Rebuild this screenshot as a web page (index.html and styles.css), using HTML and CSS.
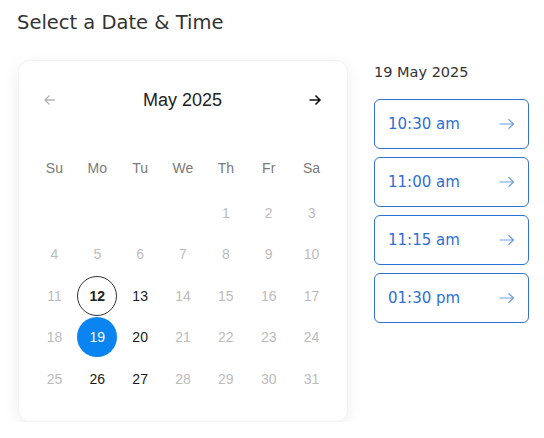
FILE: index.html
```html
<!DOCTYPE html>
<html>
<head>
<meta charset="utf-8">
<link rel="stylesheet" href="styles.css">
</head>
<body>
<div class="page">
  <h1 class="title">Select a Date &amp; Time</h1>
  <div class="main">
    <div class="card">
      <div class="cal-head">
        <span class="nav nav-prev">
          <svg width="14" height="14" viewBox="0 0 14 14"><path d="M12 7H2M6.5 2.5L2 7l4.5 4.5" fill="none" stroke="#b5b5b5" stroke-width="1.3"/></svg>
        </span>
        <span class="month">May 2025</span>
        <span class="nav nav-next">
          <svg width="14" height="14" viewBox="0 0 14 14"><path d="M1.5 7h10.5M7.5 2.5L12 7l-4.5 4.5" fill="none" stroke="#111" stroke-width="1.6"/></svg>
        </span>
      </div>
      <div class="grid weekdays">
        <span>Su</span><span>Mo</span><span>Tu</span><span>We</span><span>Th</span><span>Fr</span><span>Sa</span>
      </div>
      <div class="grid days">
        <span></span><span></span><span></span><span></span>
        <span class="off">1</span><span class="off">2</span><span class="off">3</span>
        <span class="off">4</span><span class="off">5</span><span class="off">6</span><span class="off">7</span><span class="off">8</span><span class="off">9</span><span class="off">10</span>
        <span class="off">11</span><span class="today"><b>12</b></span><span class="on">13</span><span class="off">14</span><span class="off">15</span><span class="off">16</span><span class="off">17</span>
        <span class="off">18</span><span class="selected"><b>19</b></span><span class="on">20</span><span class="off">21</span><span class="off">22</span><span class="off">23</span><span class="off">24</span>
        <span class="off">25</span><span class="on">26</span><span class="on">27</span><span class="off">28</span><span class="off">29</span><span class="off">30</span><span class="off">31</span>
      </div>
    </div>
    <div class="times">
      <div class="date-label">19 May 2025</div>
      <div class="slot"><span>10:30 am</span><svg class="arr" width="16" height="12" viewBox="0 0 16 12"><path d="M0.5 6h14M9.5 1.2L14.5 6l-5 4.8" fill="none" stroke="#6f9de6" stroke-width="1.2"/></svg></div>
      <div class="slot"><span>11:00 am</span><svg class="arr" width="16" height="12" viewBox="0 0 16 12"><path d="M0.5 6h14M9.5 1.2L14.5 6l-5 4.8" fill="none" stroke="#6f9de6" stroke-width="1.2"/></svg></div>
      <div class="slot"><span>11:15 am</span><svg class="arr" width="16" height="12" viewBox="0 0 16 12"><path d="M0.5 6h14M9.5 1.2L14.5 6l-5 4.8" fill="none" stroke="#6f9de6" stroke-width="1.2"/></svg></div>
      <div class="slot"><span>01:30 pm</span><svg class="arr" width="16" height="12" viewBox="0 0 16 12"><path d="M0.5 6h14M9.5 1.2L14.5 6l-5 4.8" fill="none" stroke="#6f9de6" stroke-width="1.2"/></svg></div>
    </div>
  </div>
</div>
</body>
</html>
```
FILE: styles.css
```css
* { box-sizing: border-box; }
html, body { margin: 0; padding: 0; background: #fff; }
.page {
  padding: 9px 0 0 17px;
  font-family: "DejaVu Sans", sans-serif;
}
.title {
  margin: 0;
  font-size: 19.5px;
  font-weight: 400;
  line-height: 27px;
  color: #333;
}
.main {
  display: flex;
  align-items: flex-start;
  margin-top: 24px;
  padding-left: 1px;
}
.card {
  width: 330px;
  height: 362px;
  background: #fff;
  border-radius: 12px;
  border: 1px solid #f2f2f2;
  box-shadow: 0 4px 16px rgba(0,0,0,0.075);
  padding: 19px 14px 22px;
  font-family: "Liberation Sans", Arial, sans-serif;
}
.cal-head {
  height: 40px;
  display: flex;
  align-items: center;
  justify-content: space-between;
  padding: 0 11px 0 10px;
}
.month {
  font-size: 18px;
  color: #222;
}
.nav { display: flex; align-items: center; }
.grid {
  display: grid;
  grid-template-columns: repeat(7, 1fr);
}
.weekdays {
  margin-top: 27px;
  height: 42px;
  align-items: center;
  margin-bottom: 3px;
}
.weekdays span {
  text-align: center;
  font-size: 14px;
  color: #7a7a7a;
}
.days span {
  height: 41.5px;
  display: flex;
  align-items: center;
  justify-content: center;
  font-size: 14px;
  position: relative;
}
.days .off { color: #bcbcbc; }
.days .on { color: #1a1a1a; }
.days .today b, .days .selected b {
  width: 40px;
  height: 40px;
  border-radius: 50%;
  display: flex;
  align-items: center;
  justify-content: center;
}
.days .today b {
  border: 1px solid #333;
  color: #222;
  font-weight: 700;
}
.days .selected b {
  background: #0a84f0;
  color: #fff;
  font-weight: 400;
}
.times {
  margin-left: 26px;
  width: 155px;
}
.date-label {
  font-size: 14.5px;
  color: #333;
  line-height: 20px;
  margin-top: 2px;
  margin-bottom: 17px;
}
.slot {
  height: 50px;
  border: 1px solid #3270d4;
  border-radius: 6px;
  display: flex;
  align-items: center;
  justify-content: space-between;
  padding: 0 13px 0 13px;
  margin-bottom: 8px;
  color: #2f6fd3;
  font-size: 15px;
}
.slot .arr { display: block; }
```
